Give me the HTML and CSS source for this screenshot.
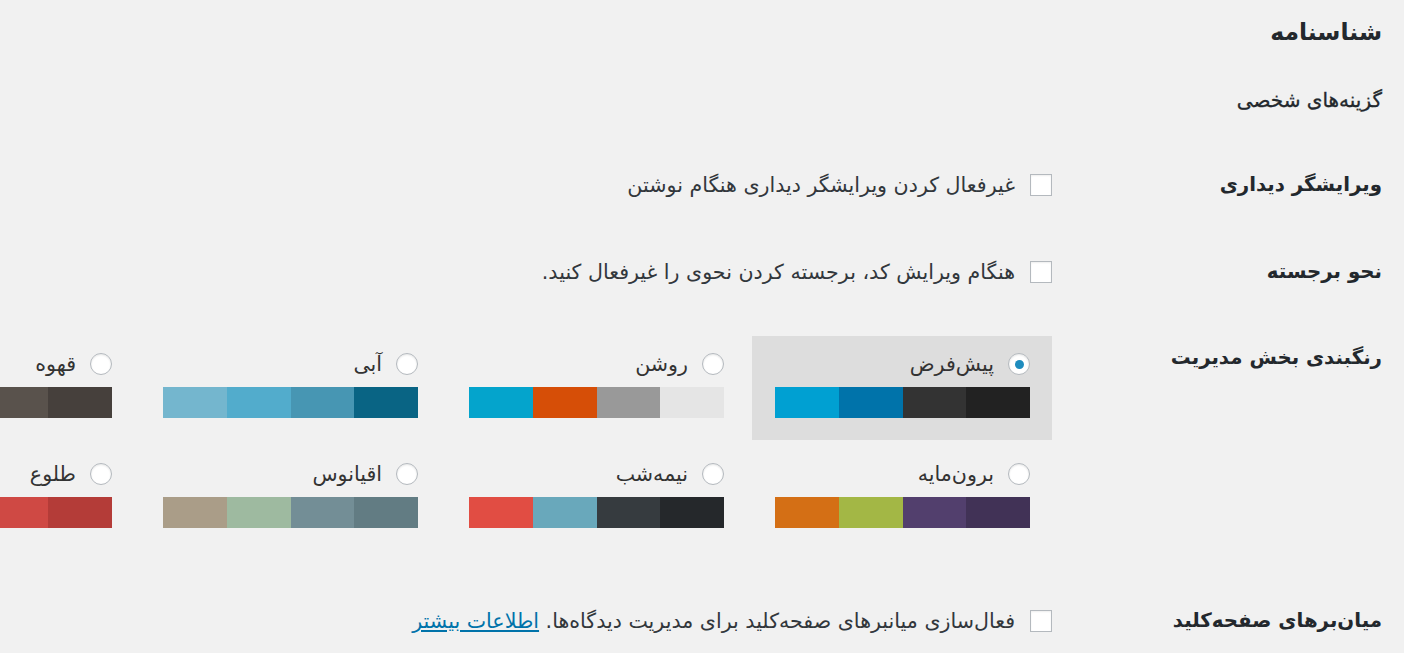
FILE: index.html
```html
<!DOCTYPE html>
<html lang="fa" dir="rtl">
<head>
<meta charset="utf-8">
<title>شناسنامه</title>
<link rel="stylesheet" href="styles.css">
</head>
<body>
<div class="wrap">
  <h1 class="title">شناسنامه</h1>
  <h2 class="subtitle">گزینه‌های شخصی</h2>

  <div class="row row-editor">
    <div class="th">ویرایشگر دیداری</div>
    <div class="td">
      <label class="check"><span class="box"></span><span>غیرفعال کردن ویرایشگر دیداری هنگام نوشتن</span></label>
    </div>
  </div>

  <div class="row row-syntax">
    <div class="th">نحو برجسته</div>
    <div class="td">
      <label class="check"><span class="box"></span><span>هنگام ویرایش کد، برجسته کردن نحوی را غیرفعال کنید.</span></label>
    </div>
  </div>

  <div class="row row-colors">
    <div class="th">رنگبندی بخش مدیریت</div>
    <div class="td td-colors">
      <div class="picker">
        <div class="opt selected">
          <div class="opt-head"><span class="radio checked"></span><span>پیش‌فرض</span></div>
          <div class="swatches"><span style="background:#222"></span><span style="background:#333"></span><span style="background:#0073aa"></span><span style="background:#00a0d2"></span></div>
        </div>
        <div class="opt">
          <div class="opt-head"><span class="radio"></span><span>روشن</span></div>
          <div class="swatches"><span style="background:#e5e5e5"></span><span style="background:#999"></span><span style="background:#d64e07"></span><span style="background:#04a4cc"></span></div>
        </div>
        <div class="opt">
          <div class="opt-head"><span class="radio"></span><span>آبی</span></div>
          <div class="swatches"><span style="background:#096484"></span><span style="background:#4796b3"></span><span style="background:#52accc"></span><span style="background:#74b6ce"></span></div>
        </div>
        <div class="opt">
          <div class="opt-head"><span class="radio"></span><span>قهوه</span></div>
          <div class="swatches"><span style="background:#46403c"></span><span style="background:#59524c"></span><span style="background:#c7a589"></span><span style="background:#9ea476"></span></div>
        </div>
        <div class="opt">
          <div class="opt-head"><span class="radio"></span><span>برون‌مایه</span></div>
          <div class="swatches"><span style="background:#413256"></span><span style="background:#523f6d"></span><span style="background:#a3b745"></span><span style="background:#d46f15"></span></div>
        </div>
        <div class="opt">
          <div class="opt-head"><span class="radio"></span><span>نیمه‌شب</span></div>
          <div class="swatches"><span style="background:#25282b"></span><span style="background:#363b3f"></span><span style="background:#69a8bb"></span><span style="background:#e14d43"></span></div>
        </div>
        <div class="opt">
          <div class="opt-head"><span class="radio"></span><span>اقیانوس</span></div>
          <div class="swatches"><span style="background:#627c83"></span><span style="background:#738e96"></span><span style="background:#9ebaa0"></span><span style="background:#aa9d88"></span></div>
        </div>
        <div class="opt">
          <div class="opt-head"><span class="radio"></span><span>طلوع</span></div>
          <div class="swatches"><span style="background:#b43c38"></span><span style="background:#cf4944"></span><span style="background:#dd823b"></span><span style="background:#ccaf0b"></span></div>
        </div>
      </div>
    </div>
  </div>

  <div class="row row-keys">
    <div class="th">میان‌برهای صفحه‌کلید</div>
    <div class="td">
      <label class="check"><span class="box"></span><span>فعال‌سازی میانبرهای صفحه‌کلید برای مدیریت دیدگاه‌ها. <a href="#">اطلاعات بیشتر</a></span></label>
    </div>
  </div>
</div>
</body>
</html>
```

FILE: styles.css
```css
html, body {
  margin: 0;
  padding: 0;
  background: #f1f1f1;
  overflow: hidden;
  height: 653px;
}
body {
  direction: rtl;
  font-family: "DejaVu Sans", sans-serif;
  color: #444;
  font-size: 20.6px;
}
.wrap {
  padding-right: 22px;
}
.title {
  font-size: 23.5px;
  font-weight: bold;
  color: #23282d;
  margin: 0;
  padding-top: 17px;
  line-height: 31px;
}
.subtitle {
  font-size: 20px;
  font-weight: normal;
  color: #23282d;
  margin: 0;
  padding-top: 40px;
  line-height: 24px;
  -webkit-text-stroke: 0.3px #23282d;
}
.row {
  display: flex;
  align-items: flex-start;
}
.th {
  width: 330px;
  flex: none;
  font-weight: bold;
  font-size: 19.8px;
  color: #23282d;
  line-height: 24px;
  padding-top: 30px;
}
.td {
  flex: 1;
  padding-top: 30px;
  line-height: 24px;
}
.row-editor { margin-top: 31px; }
.row-editor .th, .row-editor .td { padding-bottom: 33px; }
.row-syntax .th, .row-syntax .td { padding-bottom: 32px; }
.row-colors .th { padding-top: 30px; }
.row-colors .td { padding-top: 20px; }
.row-keys .th, .row-keys .td { padding-top: 59px; }

.check {
  display: flex;
  align-items: center;
  gap: 15px;
  color: #32373c;
}
.box {
  width: 20px;
  height: 20px;
  flex: none;
  background: #fff;
  border: 1px solid #b4b9be;
  box-shadow: inset 0 1px 2px rgba(0,0,0,.07);
}
.check a {
  color: #0073aa;
  text-decoration: underline;
}
.picker {
  display: grid;
  grid-template-columns: repeat(4, 300px);
  column-gap: 6px;
  row-gap: 6px;
  width: 1218px;
}
.opt {
  box-sizing: border-box;
  height: 104px;
  padding: 16px 22px 0 23px;
}
.opt.selected {
  background: #ddd;
}
.opt-head {
  display: flex;
  align-items: center;
  gap: 14px;
  color: #333;
  height: 24px;
}
.radio {
  width: 20px;
  height: 20px;
  flex: none;
  border-radius: 50%;
  background: #fff;
  border: 1px solid #b4b9be;
  box-shadow: inset 0 1px 2px rgba(0,0,0,.1);
  display: flex;
  align-items: center;
  justify-content: center;
}
.radio.checked::before {
  content: "";
  width: 9px;
  height: 9px;
  border-radius: 50%;
  background: #1e8cbe;
}
.swatches {
  display: flex;
  margin-top: 11px;
  height: 31px;
}
.swatches span {
  flex: 1;
}
```
